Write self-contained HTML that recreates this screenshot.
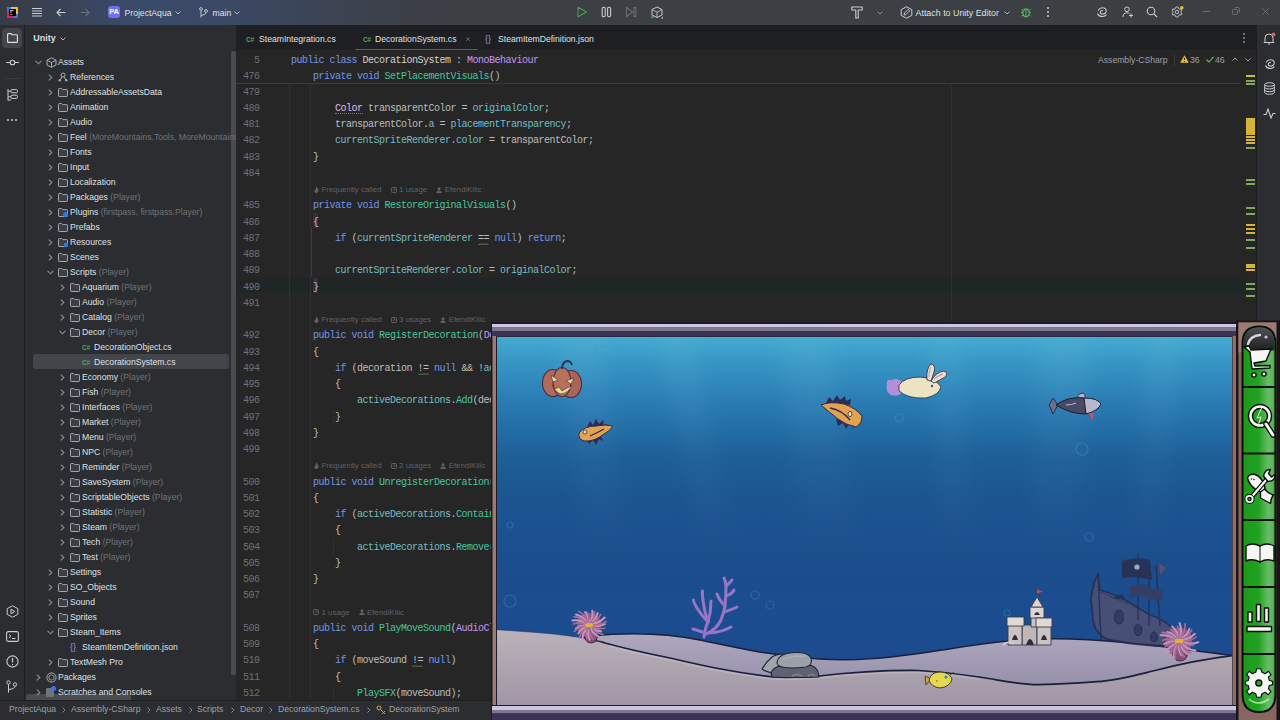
<!DOCTYPE html>
<html><head><meta charset="utf-8"><title>Rider</title>
<style>
*{margin:0;padding:0;box-sizing:border-box}
html,body{width:1280px;height:720px;overflow:hidden;background:#2b2d30;font-family:"Liberation Sans",sans-serif;color:#dfe1e5}
.a{position:absolute}
#title{position:absolute;left:0;top:0;width:1280px;height:25px;background:linear-gradient(90deg,#373b45 0%,#394154 4%,#3b4a69 10%,#3b4967 17%,#3c4454 25%,#3c3f45 33%,#3c3f42 100%);}
#lstrip{position:absolute;left:0;top:25px;width:25px;height:675px;background:#2b2d30;border-right:1px solid #1e1f22}
#proj{position:absolute;left:25px;top:25px;width:211px;height:675px;background:#2b2d30;overflow:hidden}
#tabs{position:absolute;left:236px;top:25px;width:1020px;height:25px;background:#1e1f22;border-left:1px solid #1e1f22}
#editor{position:absolute;left:236px;top:50px;width:1020px;height:650px;background:#262626;overflow:hidden}
#rstrip{position:absolute;left:1256px;top:25px;width:24px;height:675px;background:#2b2d30;border-left:1px solid #1e1f22}
#status{position:absolute;left:0;top:700px;width:1280px;height:20px;background:#2b2d30;border-top:1px solid #1e1f22}
.ui{font-size:8.65px;color:#dfe1e5;white-space:nowrap;position:absolute;line-height:15px}
.tn{position:absolute;font-size:8.65px;line-height:15px;color:#dfe1e5;white-space:nowrap}
.tx{color:#6f737a}
.chev{position:absolute}
.ic{position:absolute}
.csic{position:absolute;font-size:6.5px;font-weight:bold;color:#5e9e5e;line-height:15px;letter-spacing:-0.3px}
.jsic{position:absolute;font-size:9px;color:#a38bd6;line-height:15px}
.sel{position:absolute;left:33px;width:196px;height:15px;background:#43454a;border-radius:3px}
.ln{position:absolute;left:0;width:23.5px;text-align:right;font-family:"Liberation Mono",monospace;font-size:10px;letter-spacing:-0.5px;line-height:16.25px;color:#6e7074}
.cl{position:absolute;left:55px;font-family:"Liberation Mono",monospace;font-size:10px;letter-spacing:-0.5px;line-height:16.25px;color:#bdbdbd;white-space:pre}
.hint{position:absolute;font-size:7.9px;line-height:16.25px;color:#5f6166;white-space:nowrap}
.hint .sp{display:inline-block;width:9px}
.hic{display:inline-block;vertical-align:-0.5px;margin-right:2.5px}
.hi-fl,.hi-us,.hi-au{display:inline-block;width:5px;height:6px;background:#5c5f64;margin-right:2px;vertical-align:-0.5px;border-radius:1px}
svg{display:block}
.ic svg{display:block}

</style></head>
<body>
<div id="title">
  <!-- rider logo -->
  <svg class="a" style="left:7px;top:7px" width="11" height="11" viewBox="0 0 11 11">
    <rect x="0" y="0" width="11" height="11" rx="1" fill="#e01e6a"/>
    <path d="M3 0 H10 Q11 0 11 1 V8 L8 8 V3 H3 Z" fill="#f2c230"/>
    <path d="M0 0 H4 V2 H2 V4 H0 Z" fill="#3b78d4"/>
    <path d="M11 7 V11 H7 V9 H9 V7 Z" fill="#3b78d4"/>
    <rect x="2" y="2" width="7" height="7" fill="#000"/>
    <path d="M3 3.5 H6.5 M3 5 H5" stroke="#d8d8d8" stroke-width="0.9"/>
    <path d="M3 7.5 H5.5" stroke="#b8b8b8" stroke-width="0.7"/>
  </svg>
  <!-- hamburger -->
  <svg class="a" style="left:32px;top:7px" width="10" height="10" viewBox="0 0 10 10"><path d="M0 1.5H10M0 4H10M0 6.5H10M0 9H10" stroke="#c9ccd1" stroke-width="1"/></svg>
  <!-- back/forward -->
  <svg class="a" style="left:56px;top:8px" width="10" height="9" viewBox="0 0 10 9"><path d="M9.5 4.5H1M4.5 1L1 4.5L4.5 8" fill="none" stroke="#c9ccd1" stroke-width="1.1"/></svg>
  <svg class="a" style="left:80px;top:8px" width="10" height="9" viewBox="0 0 10 9"><path d="M0.5 4.5H9M5.5 1L9 4.5L5.5 8" fill="none" stroke="#6a6e75" stroke-width="1.1"/></svg>
  <!-- PA -->
  <div class="a" style="left:108px;top:6px;width:12px;height:12px;background:#6f6ff0;border-radius:3px;color:#fff;font-size:7.5px;font-weight:bold;line-height:12px;text-align:center;letter-spacing:-0.2px">PA</div>
  <div class="ui" style="left:124.5px;top:5.5px;font-size:8.65px">ProjectAqua</div>
  <svg class="a" style="left:175px;top:11px" width="6" height="4" viewBox="0 0 6 4"><path d="M0.5 0.5L3 3L5.5 0.5" fill="none" stroke="#b0b3b8" stroke-width="1"/></svg>
  <!-- branch -->
  <svg class="a" style="left:199px;top:7px" width="9" height="11" viewBox="0 0 9 11"><circle cx="2" cy="2" r="1.4" fill="none" stroke="#c9ccd1" stroke-width="0.9"/><circle cx="7" cy="4" r="1.4" fill="none" stroke="#c9ccd1" stroke-width="0.9"/><path d="M2 3.5V10.5M7 5.5Q7 8 2 8.5" fill="none" stroke="#c9ccd1" stroke-width="0.9"/></svg>
  <div class="ui" style="left:212.5px;top:5.5px;font-size:8.65px">main</div>
  <svg class="a" style="left:234px;top:11px" width="6" height="4" viewBox="0 0 6 4"><path d="M0.5 0.5L3 3L5.5 0.5" fill="none" stroke="#b0b3b8" stroke-width="1"/></svg>
  <!-- run controls -->
  <svg class="a" style="left:576px;top:6px" width="12" height="12" viewBox="0 0 12 12"><path d="M2 1.2L10.5 6L2 10.8Z" fill="none" stroke="#4f9a55" stroke-width="1.1" stroke-linejoin="round"/></svg>
  <svg class="a" style="left:601px;top:6px" width="11" height="12" viewBox="0 0 11 12"><rect x="1.2" y="1.2" width="3" height="9.6" rx="1.2" fill="none" stroke="#c9ccd1" stroke-width="1.1"/><rect x="6.6" y="1.2" width="3" height="9.6" rx="1.2" fill="none" stroke="#c9ccd1" stroke-width="1.1"/></svg>
  <svg class="a" style="left:625px;top:6px" width="12" height="12" viewBox="0 0 12 12"><path d="M1.5 1.5L7.5 6L1.5 10.5Z" fill="none" stroke="#6a6e75" stroke-width="1.1"/><rect x="9" y="1.5" width="1.8" height="9" fill="none" stroke="#6a6e75" stroke-width="1"/></svg>
  <svg class="a" style="left:650px;top:6px" width="14" height="13" viewBox="0 0 14 13"><path d="M7 1L12 3.5V9L7 11.5L2 9V3.5Z" fill="none" stroke="#c9ccd1" stroke-width="1"/><path d="M7 6.3L11 4M7 6.3V11M7 6.3L3 4" fill="none" stroke="#c9ccd1" stroke-width="0.8"/><circle cx="2.5" cy="11" r="1.2" fill="#4e9a50"/><path d="M11 12.5L13 10.5V12.5Z" fill="#c9ccd1"/></svg>
  <!-- hammer -->
  <svg class="a" style="left:851px;top:6px" width="12" height="13" viewBox="0 0 12 13"><path d="M0.8 1H11.2V4H7.2V12H4.8V4H0.8Z" fill="none" stroke="#c9ccd1" stroke-width="1.1" stroke-linejoin="round"/></svg>
  <svg class="a" style="left:877px;top:11px" width="6" height="4" viewBox="0 0 6 4"><path d="M0.5 0.5L3 3L5.5 0.5" fill="none" stroke="#8c8f94" stroke-width="1"/></svg>
  <!-- attach -->
  <svg class="a" style="left:900px;top:6px" width="13" height="13" viewBox="0 0 13 13"><path d="M6.5 0.8L11.8 3.6V9.4L6.5 12.2L1.2 9.4V3.6Z" fill="none" stroke="#c9ccd1" stroke-width="1"/><path d="M4 9L4.5 7L8.2 3.3L9.7 4.8L6 8.5Z" fill="none" stroke="#c9ccd1" stroke-width="0.9"/></svg>
  <div class="ui" style="left:915.5px;top:6px;font-size:8.9px">Attach to Unity Editor</div>
  <svg class="a" style="left:1004px;top:11px" width="6" height="4" viewBox="0 0 6 4"><path d="M0.5 0.5L3 3L5.5 0.5" fill="none" stroke="#b0b3b8" stroke-width="1"/></svg>
  <!-- bug -->
  <svg class="a" style="left:1020px;top:6px" width="12" height="12" viewBox="0 0 12 12"><ellipse cx="6" cy="7" rx="3.2" ry="3.8" fill="none" stroke="#5fb865" stroke-width="1.2"/><path d="M4 2.5L5 3.5M8 2.5L7 3.5M1 6.5H2.8M9.2 6.5H11M1.5 10L3 9M10.5 10L9 9M1.5 3.5L3 4.5M10.5 3.5L9 4.5M6 4V10.5" stroke="#5fb865" stroke-width="1"/></svg>
  <!-- dots -->
  <div class="a" style="left:1047px;top:7px;width:2px;height:2px;background:#c9ccd1;border-radius:1px;box-shadow:0 4px 0 #c9ccd1,0 8px 0 #c9ccd1"></div>
  <!-- ai -->
  <svg class="a" style="left:1096px;top:6px" width="12" height="12" viewBox="0 0 12 12"><path d="M2 4.5Q4 1 8 2Q11 3 10 6Q9 8.5 6 8Q3.8 7.5 4.5 5.5Q5.3 4 7 4.8M1.5 7.5Q3 11 7 10.5Q9.5 10 10.5 8.5" fill="none" stroke="#c9ccd1" stroke-width="1.1"/></svg>
  <!-- user add -->
  <svg class="a" style="left:1122px;top:6px" width="12" height="12" viewBox="0 0 12 12"><circle cx="5" cy="3.3" r="2.3" fill="none" stroke="#c9ccd1" stroke-width="1"/><path d="M1 11Q1 6.8 5 6.8Q6.5 6.8 7.3 7.4" fill="none" stroke="#c9ccd1" stroke-width="1"/><path d="M9 7.5V11.5M7 9.5H11" stroke="#c9ccd1" stroke-width="1"/></svg>
  <!-- search -->
  <svg class="a" style="left:1146px;top:6px" width="12" height="12" viewBox="0 0 12 12"><circle cx="5" cy="5" r="3.8" fill="none" stroke="#c9ccd1" stroke-width="1.1"/><path d="M7.8 7.8L11 11" stroke="#c9ccd1" stroke-width="1.2"/></svg>
  <!-- gear -->
  <svg class="a" style="left:1171px;top:6px" width="13" height="12" viewBox="0 0 13 12"><path d="M6 0.8L7.3 1.3L7.6 2.6L8.9 3.3L10.1 2.9L10.9 4.1L10.1 5.2V6.8L10.9 7.9L10.1 9.1L8.9 8.7L7.6 9.4L7.3 10.7L6 11.2L4.7 10.7L4.4 9.4L3.1 8.7L1.9 9.1L1.1 7.9L1.9 6.8V5.2L1.1 4.1L1.9 2.9L3.1 3.3L4.4 2.6L4.7 1.3Z" fill="none" stroke="#c9ccd1" stroke-width="0.9"/><circle cx="6" cy="6" r="1.7" fill="none" stroke="#c9ccd1" stroke-width="0.9"/><circle cx="10.8" cy="1.8" r="1.8" fill="#e8b93a"/></svg>
  <!-- window controls -->
  <div class="a" style="left:1203px;top:11px;width:7px;height:1px;background:#6a6e75"></div>
  <svg class="a" style="left:1232px;top:7px" width="8" height="8" viewBox="0 0 8 8"><rect x="0.5" y="2.5" width="5" height="5" rx="1" fill="none" stroke="#6a6e75"/><path d="M2.5 1.5Q2.5 0.5 3.5 0.5H6.5Q7.5 0.5 7.5 1.5V4.5Q7.5 5.5 6.5 5.5" fill="none" stroke="#6a6e75"/></svg>
  <svg class="a" style="left:1262px;top:8px" width="7" height="7" viewBox="0 0 7 7"><path d="M0.5 0.5L6.5 6.5M6.5 0.5L0.5 6.5" stroke="#6a6e75" stroke-width="1"/></svg>
</div>
<div id="lstrip">
  <div class="a" style="left:2px;top:3px;width:20px;height:20px;background:#43454a;border-radius:4px"></div>
  <svg class="a" style="left:7px;top:8px" width="11" height="10" viewBox="0 0 11 10"><path d="M0.6 1.3Q0.6 0.6 1.3 0.6H4L5 1.7H9.7Q10.4 1.7 10.4 2.4V8.7Q10.4 9.4 9.7 9.4H1.3Q0.6 9.4 0.6 8.7Z" fill="none" stroke="#dfe1e5" stroke-width="1.1"/></svg>
  <svg class="a" style="left:6px;top:34px" width="13" height="7" viewBox="0 0 13 7"><circle cx="6.5" cy="3.5" r="2.3" fill="none" stroke="#c9ccd1" stroke-width="1.1"/><path d="M0 3.5H4.2M8.8 3.5H13" stroke="#c9ccd1" stroke-width="1.1"/></svg>
  <div class="a" style="left:5px;top:53px;width:15px;height:1px;background:#393b40"></div>
  <svg class="a" style="left:7px;top:64px" width="11" height="12" viewBox="0 0 11 12"><rect x="4" y="0.6" width="6.4" height="3.2" rx="1" fill="none" stroke="#c9ccd1" stroke-width="1"/><rect x="4" y="6.2" width="6.4" height="3.2" rx="1" fill="none" stroke="#c9ccd1" stroke-width="1"/><path d="M1 0V11.5M1 2.2H4M1 7.8H4M1 11H4" stroke="#c9ccd1" stroke-width="1"/></svg>
  <div class="a" style="left:7px;top:94px;width:2px;height:2px;background:#c9ccd1;border-radius:1px;box-shadow:4px 0 0 #c9ccd1,8px 0 0 #c9ccd1"></div>
  <svg class="a" style="left:6px;top:580px" width="13" height="13" viewBox="0 0 13 13"><path d="M6.5 0.8L11.8 3.6V9.4L6.5 12.2L1.2 9.4V3.6Z" fill="none" stroke="#c9ccd1" stroke-width="1"/><path d="M5 4.2L8.8 6.5L5 8.8Z" fill="none" stroke="#c9ccd1" stroke-width="1"/></svg>
  <svg class="a" style="left:6px;top:606px" width="13" height="11" viewBox="0 0 13 11"><rect x="0.6" y="0.6" width="11.8" height="9.8" rx="1.5" fill="none" stroke="#c9ccd1" stroke-width="1.1"/><path d="M3 3.5L5 5.3L3 7M6 7.5H9.5" fill="none" stroke="#c9ccd1" stroke-width="1"/></svg>
  <svg class="a" style="left:6px;top:630px" width="13" height="13" viewBox="0 0 13 13"><circle cx="6.5" cy="6.5" r="5.6" fill="none" stroke="#c9ccd1" stroke-width="1.1"/><path d="M6.5 3V7.5M6.5 9V10" stroke="#c9ccd1" stroke-width="1.3"/></svg>
  <svg class="a" style="left:6px;top:655px" width="12" height="13" viewBox="0 0 12 13"><circle cx="2.5" cy="2.5" r="1.7" fill="none" stroke="#c9ccd1" stroke-width="1"/><circle cx="9" cy="4.5" r="1.7" fill="none" stroke="#c9ccd1" stroke-width="1"/><path d="M2.5 4.2V12.5M9 6.2Q9 9 2.5 9.5" fill="none" stroke="#c9ccd1" stroke-width="1"/></svg>
</div>
<div id="proj">
  <div class="ui" style="left:8.3px;top:5.5px;font-size:9px;font-weight:bold;color:#dcdee2">Unity</div>
  <svg class="a" style="left:35px;top:12px" width="6" height="4" viewBox="0 0 6 4"><path d="M0.5 0.5L3 3L5.5 0.5" fill="none" stroke="#b0b3b8" stroke-width="1"/></svg>
  <div class="a" style="left:206px;top:26px;width:5px;height:624px;background:#4a4c50;border-radius:2px"></div>
  <div class="a" style="left:1px;top:669px;width:105px;height:6px;background:#4a4c50;border-radius:3px 3px 0 0"></div>
  <div style="position:absolute;left:0;top:0;width:211px;height:675px">
  <div style="position:absolute;left:-25px;top:-25px">
<svg class="chev" style="left:35px;top:59.5px" width="7" height="5" viewBox="0 0 7 5"><path d="M0.6 0.8 L3.5 3.8 L6.4 0.8" fill="none" stroke="#8c8f94" stroke-width="1.1"/></svg><svg class="ic" style="left:46px;top:56.5px" width="11" height="11" viewBox="0 0 11 11"><path d="M5.5 0.8 L10 3.2 V8 L5.5 10.3 L1 8 V3.2 Z M5.5 5.5 L10 3.2 M5.5 5.5 V10.3 M5.5 5.5 L1 3.2" fill="none" stroke="#a8abb0" stroke-width="1"/></svg><div class="tn" style="left:58px;top:54.5px">Assets</div>
<svg class="chev" style="left:48px;top:73.5px" width="5" height="7" viewBox="0 0 5 7"><path d="M0.8 0.6 L3.8 3.5 L0.8 6.4" fill="none" stroke="#8c8f94" stroke-width="1.1"/></svg><svg class="ic" style="left:58px;top:71.5px" width="10" height="10" viewBox="0 0 10 10"><circle cx="5" cy="3" r="2" fill="none" stroke="#a8abb0"/><circle cx="1.8" cy="8.3" r="1.2" fill="#a8abb0"/><circle cx="8.2" cy="8.3" r="1.2" fill="#a8abb0"/><path d="M4 4.8 L2 8 M6 4.8 L8 8" stroke="#a8abb0"/></svg><div class="tn" style="left:70px;top:69.5px">References</div>
<svg class="chev" style="left:48px;top:88.5px" width="5" height="7" viewBox="0 0 5 7"><path d="M0.8 0.6 L3.8 3.5 L0.8 6.4" fill="none" stroke="#8c8f94" stroke-width="1.1"/></svg><div class="ic" style="left:58px;top:87.5px"><svg width="10" height="9" viewBox="0 0 10 9"><path d="M0.5 1.2 Q0.5 0.5 1.2 0.5 H3.6 L4.6 1.6 H8.8 Q9.5 1.6 9.5 2.3 V7.8 Q9.5 8.5 8.8 8.5 H1.2 Q0.5 8.5 0.5 7.8 Z" fill="#3c3e43" stroke="#a2a5aa" stroke-width="1"/></svg></div><div class="tn" style="left:70px;top:84.5px">AddressableAssetsData</div>
<svg class="chev" style="left:48px;top:103.5px" width="5" height="7" viewBox="0 0 5 7"><path d="M0.8 0.6 L3.8 3.5 L0.8 6.4" fill="none" stroke="#8c8f94" stroke-width="1.1"/></svg><div class="ic" style="left:58px;top:102.5px"><svg width="10" height="9" viewBox="0 0 10 9"><path d="M0.5 1.2 Q0.5 0.5 1.2 0.5 H3.6 L4.6 1.6 H8.8 Q9.5 1.6 9.5 2.3 V7.8 Q9.5 8.5 8.8 8.5 H1.2 Q0.5 8.5 0.5 7.8 Z" fill="#3c3e43" stroke="#a2a5aa" stroke-width="1"/></svg></div><div class="tn" style="left:70px;top:99.5px">Animation</div>
<svg class="chev" style="left:48px;top:118.5px" width="5" height="7" viewBox="0 0 5 7"><path d="M0.8 0.6 L3.8 3.5 L0.8 6.4" fill="none" stroke="#8c8f94" stroke-width="1.1"/></svg><div class="ic" style="left:58px;top:117.5px"><svg width="10" height="9" viewBox="0 0 10 9"><path d="M0.5 1.2 Q0.5 0.5 1.2 0.5 H3.6 L4.6 1.6 H8.8 Q9.5 1.6 9.5 2.3 V7.8 Q9.5 8.5 8.8 8.5 H1.2 Q0.5 8.5 0.5 7.8 Z" fill="#3c3e43" stroke="#a2a5aa" stroke-width="1"/></svg></div><div class="tn" style="left:70px;top:114.5px">Audio</div>
<svg class="chev" style="left:48px;top:133.5px" width="5" height="7" viewBox="0 0 5 7"><path d="M0.8 0.6 L3.8 3.5 L0.8 6.4" fill="none" stroke="#8c8f94" stroke-width="1.1"/></svg><div class="ic" style="left:58px;top:132.5px"><svg width="10" height="9" viewBox="0 0 10 9"><path d="M0.5 1.2 Q0.5 0.5 1.2 0.5 H3.6 L4.6 1.6 H8.8 Q9.5 1.6 9.5 2.3 V7.8 Q9.5 8.5 8.8 8.5 H1.2 Q0.5 8.5 0.5 7.8 Z" fill="#3c3e43" stroke="#a2a5aa" stroke-width="1"/></svg></div><div class="tn" style="left:70px;top:129.5px">Feel <span class="tx">(MoreMountains.Tools, MoreMountains.Feedbacks)</span></div>
<svg class="chev" style="left:48px;top:148.5px" width="5" height="7" viewBox="0 0 5 7"><path d="M0.8 0.6 L3.8 3.5 L0.8 6.4" fill="none" stroke="#8c8f94" stroke-width="1.1"/></svg><div class="ic" style="left:58px;top:147.5px"><svg width="10" height="9" viewBox="0 0 10 9"><path d="M0.5 1.2 Q0.5 0.5 1.2 0.5 H3.6 L4.6 1.6 H8.8 Q9.5 1.6 9.5 2.3 V7.8 Q9.5 8.5 8.8 8.5 H1.2 Q0.5 8.5 0.5 7.8 Z" fill="#3c3e43" stroke="#a2a5aa" stroke-width="1"/></svg></div><div class="tn" style="left:70px;top:144.5px">Fonts</div>
<svg class="chev" style="left:48px;top:163.5px" width="5" height="7" viewBox="0 0 5 7"><path d="M0.8 0.6 L3.8 3.5 L0.8 6.4" fill="none" stroke="#8c8f94" stroke-width="1.1"/></svg><div class="ic" style="left:58px;top:162.5px"><svg width="10" height="9" viewBox="0 0 10 9"><path d="M0.5 1.2 Q0.5 0.5 1.2 0.5 H3.6 L4.6 1.6 H8.8 Q9.5 1.6 9.5 2.3 V7.8 Q9.5 8.5 8.8 8.5 H1.2 Q0.5 8.5 0.5 7.8 Z" fill="#3c3e43" stroke="#a2a5aa" stroke-width="1"/></svg></div><div class="tn" style="left:70px;top:159.5px">Input</div>
<svg class="chev" style="left:48px;top:178.5px" width="5" height="7" viewBox="0 0 5 7"><path d="M0.8 0.6 L3.8 3.5 L0.8 6.4" fill="none" stroke="#8c8f94" stroke-width="1.1"/></svg><div class="ic" style="left:58px;top:177.5px"><svg width="10" height="9" viewBox="0 0 10 9"><path d="M0.5 1.2 Q0.5 0.5 1.2 0.5 H3.6 L4.6 1.6 H8.8 Q9.5 1.6 9.5 2.3 V7.8 Q9.5 8.5 8.8 8.5 H1.2 Q0.5 8.5 0.5 7.8 Z" fill="#3c3e43" stroke="#a2a5aa" stroke-width="1"/></svg></div><div class="tn" style="left:70px;top:174.5px">Localization</div>
<svg class="chev" style="left:48px;top:193.5px" width="5" height="7" viewBox="0 0 5 7"><path d="M0.8 0.6 L3.8 3.5 L0.8 6.4" fill="none" stroke="#8c8f94" stroke-width="1.1"/></svg><div class="ic" style="left:58px;top:192.5px"><svg width="10" height="9" viewBox="0 0 10 9"><path d="M0.5 1.2 Q0.5 0.5 1.2 0.5 H3.6 L4.6 1.6 H8.8 Q9.5 1.6 9.5 2.3 V7.8 Q9.5 8.5 8.8 8.5 H1.2 Q0.5 8.5 0.5 7.8 Z" fill="#3c3e43" stroke="#a2a5aa" stroke-width="1"/></svg></div><div class="tn" style="left:70px;top:189.5px">Packages <span class="tx">(Player)</span></div>
<svg class="chev" style="left:48px;top:208.5px" width="5" height="7" viewBox="0 0 5 7"><path d="M0.8 0.6 L3.8 3.5 L0.8 6.4" fill="none" stroke="#8c8f94" stroke-width="1.1"/></svg><div class="ic" style="left:58px;top:207.5px"><svg width="10" height="9" viewBox="0 0 10 9"><path d="M0.5 1.2 Q0.5 0.5 1.2 0.5 H3.6 L4.6 1.6 H8.8 Q9.5 1.6 9.5 2.3 V7.8 Q9.5 8.5 8.8 8.5 H1.2 Q0.5 8.5 0.5 7.8 Z" fill="#3c3e43" stroke="#a2a5aa" stroke-width="1"/></svg></div><div style="position:absolute;left:63px;top:211.5px;width:5px;height:5px;border-radius:50%;background:#3574f0"></div><div class="tn" style="left:70px;top:204.5px">Plugins <span class="tx">(firstpass, firstpass.Player)</span></div>
<svg class="chev" style="left:48px;top:223.5px" width="5" height="7" viewBox="0 0 5 7"><path d="M0.8 0.6 L3.8 3.5 L0.8 6.4" fill="none" stroke="#8c8f94" stroke-width="1.1"/></svg><div class="ic" style="left:58px;top:222.5px"><svg width="10" height="9" viewBox="0 0 10 9"><path d="M0.5 1.2 Q0.5 0.5 1.2 0.5 H3.6 L4.6 1.6 H8.8 Q9.5 1.6 9.5 2.3 V7.8 Q9.5 8.5 8.8 8.5 H1.2 Q0.5 8.5 0.5 7.8 Z" fill="#3c3e43" stroke="#a2a5aa" stroke-width="1"/></svg></div><div class="tn" style="left:70px;top:219.5px">Prefabs</div>
<svg class="chev" style="left:48px;top:238.5px" width="5" height="7" viewBox="0 0 5 7"><path d="M0.8 0.6 L3.8 3.5 L0.8 6.4" fill="none" stroke="#8c8f94" stroke-width="1.1"/></svg><div class="ic" style="left:58px;top:237.5px"><svg width="10" height="9" viewBox="0 0 10 9"><path d="M0.5 1.2 Q0.5 0.5 1.2 0.5 H3.6 L4.6 1.6 H8.8 Q9.5 1.6 9.5 2.3 V7.8 Q9.5 8.5 8.8 8.5 H1.2 Q0.5 8.5 0.5 7.8 Z" fill="#3c3e43" stroke="#a2a5aa" stroke-width="1"/></svg></div><div style="position:absolute;left:64px;top:242.5px;width:4px;height:4px;background:#3574f0"></div><div class="tn" style="left:70px;top:234.5px">Resources</div>
<svg class="chev" style="left:48px;top:253.5px" width="5" height="7" viewBox="0 0 5 7"><path d="M0.8 0.6 L3.8 3.5 L0.8 6.4" fill="none" stroke="#8c8f94" stroke-width="1.1"/></svg><div class="ic" style="left:58px;top:252.5px"><svg width="10" height="9" viewBox="0 0 10 9"><path d="M0.5 1.2 Q0.5 0.5 1.2 0.5 H3.6 L4.6 1.6 H8.8 Q9.5 1.6 9.5 2.3 V7.8 Q9.5 8.5 8.8 8.5 H1.2 Q0.5 8.5 0.5 7.8 Z" fill="#3c3e43" stroke="#a2a5aa" stroke-width="1"/></svg></div><div class="tn" style="left:70px;top:249.5px">Scenes</div>
<svg class="chev" style="left:47px;top:269.5px" width="7" height="5" viewBox="0 0 7 5"><path d="M0.6 0.8 L3.5 3.8 L6.4 0.8" fill="none" stroke="#8c8f94" stroke-width="1.1"/></svg><div class="ic" style="left:58px;top:267.5px"><svg width="10" height="9" viewBox="0 0 10 9"><path d="M0.5 1.2 Q0.5 0.5 1.2 0.5 H3.6 L4.6 1.6 H8.8 Q9.5 1.6 9.5 2.3 V7.8 Q9.5 8.5 8.8 8.5 H1.2 Q0.5 8.5 0.5 7.8 Z" fill="#3c3e43" stroke="#a2a5aa" stroke-width="1"/></svg></div><div class="tn" style="left:70px;top:264.5px">Scripts <span class="tx">(Player)</span></div>
<svg class="chev" style="left:60px;top:283.5px" width="5" height="7" viewBox="0 0 5 7"><path d="M0.8 0.6 L3.8 3.5 L0.8 6.4" fill="none" stroke="#8c8f94" stroke-width="1.1"/></svg><div class="ic" style="left:70px;top:282.5px"><svg width="10" height="9" viewBox="0 0 10 9"><path d="M0.5 1.2 Q0.5 0.5 1.2 0.5 H3.6 L4.6 1.6 H8.8 Q9.5 1.6 9.5 2.3 V7.8 Q9.5 8.5 8.8 8.5 H1.2 Q0.5 8.5 0.5 7.8 Z" fill="#3c3e43" stroke="#a2a5aa" stroke-width="1"/></svg></div><div class="tn" style="left:82px;top:279.5px">Aquarium <span class="tx">(Player)</span></div>
<svg class="chev" style="left:60px;top:298.5px" width="5" height="7" viewBox="0 0 5 7"><path d="M0.8 0.6 L3.8 3.5 L0.8 6.4" fill="none" stroke="#8c8f94" stroke-width="1.1"/></svg><div class="ic" style="left:70px;top:297.5px"><svg width="10" height="9" viewBox="0 0 10 9"><path d="M0.5 1.2 Q0.5 0.5 1.2 0.5 H3.6 L4.6 1.6 H8.8 Q9.5 1.6 9.5 2.3 V7.8 Q9.5 8.5 8.8 8.5 H1.2 Q0.5 8.5 0.5 7.8 Z" fill="#3c3e43" stroke="#a2a5aa" stroke-width="1"/></svg></div><div class="tn" style="left:82px;top:294.5px">Audio <span class="tx">(Player)</span></div>
<svg class="chev" style="left:60px;top:313.5px" width="5" height="7" viewBox="0 0 5 7"><path d="M0.8 0.6 L3.8 3.5 L0.8 6.4" fill="none" stroke="#8c8f94" stroke-width="1.1"/></svg><div class="ic" style="left:70px;top:312.5px"><svg width="10" height="9" viewBox="0 0 10 9"><path d="M0.5 1.2 Q0.5 0.5 1.2 0.5 H3.6 L4.6 1.6 H8.8 Q9.5 1.6 9.5 2.3 V7.8 Q9.5 8.5 8.8 8.5 H1.2 Q0.5 8.5 0.5 7.8 Z" fill="#3c3e43" stroke="#a2a5aa" stroke-width="1"/></svg></div><div class="tn" style="left:82px;top:309.5px">Catalog <span class="tx">(Player)</span></div>
<svg class="chev" style="left:59px;top:329.5px" width="7" height="5" viewBox="0 0 7 5"><path d="M0.6 0.8 L3.5 3.8 L6.4 0.8" fill="none" stroke="#8c8f94" stroke-width="1.1"/></svg><div class="ic" style="left:70px;top:327.5px"><svg width="10" height="9" viewBox="0 0 10 9"><path d="M0.5 1.2 Q0.5 0.5 1.2 0.5 H3.6 L4.6 1.6 H8.8 Q9.5 1.6 9.5 2.3 V7.8 Q9.5 8.5 8.8 8.5 H1.2 Q0.5 8.5 0.5 7.8 Z" fill="#3c3e43" stroke="#a2a5aa" stroke-width="1"/></svg></div><div class="tn" style="left:82px;top:324.5px">Decor <span class="tx">(Player)</span></div>
<div class="csic" style="left:82px;top:339.5px">C#</div><div class="tn" style="left:94px;top:339.5px">DecorationObject.cs</div>
<div class="sel" style="top:353.7px"></div>
<div class="csic" style="left:82px;top:354.5px">C#</div><div class="tn" style="left:94px;top:354.5px">DecorationSystem.cs</div>
<svg class="chev" style="left:60px;top:373.5px" width="5" height="7" viewBox="0 0 5 7"><path d="M0.8 0.6 L3.8 3.5 L0.8 6.4" fill="none" stroke="#8c8f94" stroke-width="1.1"/></svg><div class="ic" style="left:70px;top:372.5px"><svg width="10" height="9" viewBox="0 0 10 9"><path d="M0.5 1.2 Q0.5 0.5 1.2 0.5 H3.6 L4.6 1.6 H8.8 Q9.5 1.6 9.5 2.3 V7.8 Q9.5 8.5 8.8 8.5 H1.2 Q0.5 8.5 0.5 7.8 Z" fill="#3c3e43" stroke="#a2a5aa" stroke-width="1"/></svg></div><div class="tn" style="left:82px;top:369.5px">Economy <span class="tx">(Player)</span></div>
<svg class="chev" style="left:60px;top:388.5px" width="5" height="7" viewBox="0 0 5 7"><path d="M0.8 0.6 L3.8 3.5 L0.8 6.4" fill="none" stroke="#8c8f94" stroke-width="1.1"/></svg><div class="ic" style="left:70px;top:387.5px"><svg width="10" height="9" viewBox="0 0 10 9"><path d="M0.5 1.2 Q0.5 0.5 1.2 0.5 H3.6 L4.6 1.6 H8.8 Q9.5 1.6 9.5 2.3 V7.8 Q9.5 8.5 8.8 8.5 H1.2 Q0.5 8.5 0.5 7.8 Z" fill="#3c3e43" stroke="#a2a5aa" stroke-width="1"/></svg></div><div class="tn" style="left:82px;top:384.5px">Fish <span class="tx">(Player)</span></div>
<svg class="chev" style="left:60px;top:403.5px" width="5" height="7" viewBox="0 0 5 7"><path d="M0.8 0.6 L3.8 3.5 L0.8 6.4" fill="none" stroke="#8c8f94" stroke-width="1.1"/></svg><div class="ic" style="left:70px;top:402.5px"><svg width="10" height="9" viewBox="0 0 10 9"><path d="M0.5 1.2 Q0.5 0.5 1.2 0.5 H3.6 L4.6 1.6 H8.8 Q9.5 1.6 9.5 2.3 V7.8 Q9.5 8.5 8.8 8.5 H1.2 Q0.5 8.5 0.5 7.8 Z" fill="#3c3e43" stroke="#a2a5aa" stroke-width="1"/></svg></div><div class="tn" style="left:82px;top:399.5px">Interfaces <span class="tx">(Player)</span></div>
<svg class="chev" style="left:60px;top:418.5px" width="5" height="7" viewBox="0 0 5 7"><path d="M0.8 0.6 L3.8 3.5 L0.8 6.4" fill="none" stroke="#8c8f94" stroke-width="1.1"/></svg><div class="ic" style="left:70px;top:417.5px"><svg width="10" height="9" viewBox="0 0 10 9"><path d="M0.5 1.2 Q0.5 0.5 1.2 0.5 H3.6 L4.6 1.6 H8.8 Q9.5 1.6 9.5 2.3 V7.8 Q9.5 8.5 8.8 8.5 H1.2 Q0.5 8.5 0.5 7.8 Z" fill="#3c3e43" stroke="#a2a5aa" stroke-width="1"/></svg></div><div class="tn" style="left:82px;top:414.5px">Market <span class="tx">(Player)</span></div>
<svg class="chev" style="left:60px;top:433.5px" width="5" height="7" viewBox="0 0 5 7"><path d="M0.8 0.6 L3.8 3.5 L0.8 6.4" fill="none" stroke="#8c8f94" stroke-width="1.1"/></svg><div class="ic" style="left:70px;top:432.5px"><svg width="10" height="9" viewBox="0 0 10 9"><path d="M0.5 1.2 Q0.5 0.5 1.2 0.5 H3.6 L4.6 1.6 H8.8 Q9.5 1.6 9.5 2.3 V7.8 Q9.5 8.5 8.8 8.5 H1.2 Q0.5 8.5 0.5 7.8 Z" fill="#3c3e43" stroke="#a2a5aa" stroke-width="1"/></svg></div><div class="tn" style="left:82px;top:429.5px">Menu <span class="tx">(Player)</span></div>
<svg class="chev" style="left:60px;top:448.5px" width="5" height="7" viewBox="0 0 5 7"><path d="M0.8 0.6 L3.8 3.5 L0.8 6.4" fill="none" stroke="#8c8f94" stroke-width="1.1"/></svg><div class="ic" style="left:70px;top:447.5px"><svg width="10" height="9" viewBox="0 0 10 9"><path d="M0.5 1.2 Q0.5 0.5 1.2 0.5 H3.6 L4.6 1.6 H8.8 Q9.5 1.6 9.5 2.3 V7.8 Q9.5 8.5 8.8 8.5 H1.2 Q0.5 8.5 0.5 7.8 Z" fill="#3c3e43" stroke="#a2a5aa" stroke-width="1"/></svg></div><div class="tn" style="left:82px;top:444.5px">NPC <span class="tx">(Player)</span></div>
<svg class="chev" style="left:60px;top:463.5px" width="5" height="7" viewBox="0 0 5 7"><path d="M0.8 0.6 L3.8 3.5 L0.8 6.4" fill="none" stroke="#8c8f94" stroke-width="1.1"/></svg><div class="ic" style="left:70px;top:462.5px"><svg width="10" height="9" viewBox="0 0 10 9"><path d="M0.5 1.2 Q0.5 0.5 1.2 0.5 H3.6 L4.6 1.6 H8.8 Q9.5 1.6 9.5 2.3 V7.8 Q9.5 8.5 8.8 8.5 H1.2 Q0.5 8.5 0.5 7.8 Z" fill="#3c3e43" stroke="#a2a5aa" stroke-width="1"/></svg></div><div class="tn" style="left:82px;top:459.5px">Reminder <span class="tx">(Player)</span></div>
<svg class="chev" style="left:60px;top:478.5px" width="5" height="7" viewBox="0 0 5 7"><path d="M0.8 0.6 L3.8 3.5 L0.8 6.4" fill="none" stroke="#8c8f94" stroke-width="1.1"/></svg><div class="ic" style="left:70px;top:477.5px"><svg width="10" height="9" viewBox="0 0 10 9"><path d="M0.5 1.2 Q0.5 0.5 1.2 0.5 H3.6 L4.6 1.6 H8.8 Q9.5 1.6 9.5 2.3 V7.8 Q9.5 8.5 8.8 8.5 H1.2 Q0.5 8.5 0.5 7.8 Z" fill="#3c3e43" stroke="#a2a5aa" stroke-width="1"/></svg></div><div class="tn" style="left:82px;top:474.5px">SaveSystem <span class="tx">(Player)</span></div>
<svg class="chev" style="left:60px;top:493.5px" width="5" height="7" viewBox="0 0 5 7"><path d="M0.8 0.6 L3.8 3.5 L0.8 6.4" fill="none" stroke="#8c8f94" stroke-width="1.1"/></svg><div class="ic" style="left:70px;top:492.5px"><svg width="10" height="9" viewBox="0 0 10 9"><path d="M0.5 1.2 Q0.5 0.5 1.2 0.5 H3.6 L4.6 1.6 H8.8 Q9.5 1.6 9.5 2.3 V7.8 Q9.5 8.5 8.8 8.5 H1.2 Q0.5 8.5 0.5 7.8 Z" fill="#3c3e43" stroke="#a2a5aa" stroke-width="1"/></svg></div><div class="tn" style="left:82px;top:489.5px">ScriptableObjects <span class="tx">(Player)</span></div>
<svg class="chev" style="left:60px;top:508.5px" width="5" height="7" viewBox="0 0 5 7"><path d="M0.8 0.6 L3.8 3.5 L0.8 6.4" fill="none" stroke="#8c8f94" stroke-width="1.1"/></svg><div class="ic" style="left:70px;top:507.5px"><svg width="10" height="9" viewBox="0 0 10 9"><path d="M0.5 1.2 Q0.5 0.5 1.2 0.5 H3.6 L4.6 1.6 H8.8 Q9.5 1.6 9.5 2.3 V7.8 Q9.5 8.5 8.8 8.5 H1.2 Q0.5 8.5 0.5 7.8 Z" fill="#3c3e43" stroke="#a2a5aa" stroke-width="1"/></svg></div><div class="tn" style="left:82px;top:504.5px">Statistic <span class="tx">(Player)</span></div>
<svg class="chev" style="left:60px;top:523.5px" width="5" height="7" viewBox="0 0 5 7"><path d="M0.8 0.6 L3.8 3.5 L0.8 6.4" fill="none" stroke="#8c8f94" stroke-width="1.1"/></svg><div class="ic" style="left:70px;top:522.5px"><svg width="10" height="9" viewBox="0 0 10 9"><path d="M0.5 1.2 Q0.5 0.5 1.2 0.5 H3.6 L4.6 1.6 H8.8 Q9.5 1.6 9.5 2.3 V7.8 Q9.5 8.5 8.8 8.5 H1.2 Q0.5 8.5 0.5 7.8 Z" fill="#3c3e43" stroke="#a2a5aa" stroke-width="1"/></svg></div><div class="tn" style="left:82px;top:519.5px">Steam <span class="tx">(Player)</span></div>
<svg class="chev" style="left:60px;top:538.5px" width="5" height="7" viewBox="0 0 5 7"><path d="M0.8 0.6 L3.8 3.5 L0.8 6.4" fill="none" stroke="#8c8f94" stroke-width="1.1"/></svg><div class="ic" style="left:70px;top:537.5px"><svg width="10" height="9" viewBox="0 0 10 9"><path d="M0.5 1.2 Q0.5 0.5 1.2 0.5 H3.6 L4.6 1.6 H8.8 Q9.5 1.6 9.5 2.3 V7.8 Q9.5 8.5 8.8 8.5 H1.2 Q0.5 8.5 0.5 7.8 Z" fill="#3c3e43" stroke="#a2a5aa" stroke-width="1"/></svg></div><div class="tn" style="left:82px;top:534.5px">Tech <span class="tx">(Player)</span></div>
<svg class="chev" style="left:60px;top:553.5px" width="5" height="7" viewBox="0 0 5 7"><path d="M0.8 0.6 L3.8 3.5 L0.8 6.4" fill="none" stroke="#8c8f94" stroke-width="1.1"/></svg><div class="ic" style="left:70px;top:552.5px"><svg width="10" height="9" viewBox="0 0 10 9"><path d="M0.5 1.2 Q0.5 0.5 1.2 0.5 H3.6 L4.6 1.6 H8.8 Q9.5 1.6 9.5 2.3 V7.8 Q9.5 8.5 8.8 8.5 H1.2 Q0.5 8.5 0.5 7.8 Z" fill="#3c3e43" stroke="#a2a5aa" stroke-width="1"/></svg></div><div class="tn" style="left:82px;top:549.5px">Test <span class="tx">(Player)</span></div>
<svg class="chev" style="left:48px;top:568.5px" width="5" height="7" viewBox="0 0 5 7"><path d="M0.8 0.6 L3.8 3.5 L0.8 6.4" fill="none" stroke="#8c8f94" stroke-width="1.1"/></svg><div class="ic" style="left:58px;top:567.5px"><svg width="10" height="9" viewBox="0 0 10 9"><path d="M0.5 1.2 Q0.5 0.5 1.2 0.5 H3.6 L4.6 1.6 H8.8 Q9.5 1.6 9.5 2.3 V7.8 Q9.5 8.5 8.8 8.5 H1.2 Q0.5 8.5 0.5 7.8 Z" fill="#3c3e43" stroke="#a2a5aa" stroke-width="1"/></svg></div><div class="tn" style="left:70px;top:564.5px">Settings</div>
<svg class="chev" style="left:48px;top:583.5px" width="5" height="7" viewBox="0 0 5 7"><path d="M0.8 0.6 L3.8 3.5 L0.8 6.4" fill="none" stroke="#8c8f94" stroke-width="1.1"/></svg><div class="ic" style="left:58px;top:582.5px"><svg width="10" height="9" viewBox="0 0 10 9"><path d="M0.5 1.2 Q0.5 0.5 1.2 0.5 H3.6 L4.6 1.6 H8.8 Q9.5 1.6 9.5 2.3 V7.8 Q9.5 8.5 8.8 8.5 H1.2 Q0.5 8.5 0.5 7.8 Z" fill="#3c3e43" stroke="#a2a5aa" stroke-width="1"/></svg></div><div class="tn" style="left:70px;top:579.5px">SO_Objects</div>
<svg class="chev" style="left:48px;top:598.5px" width="5" height="7" viewBox="0 0 5 7"><path d="M0.8 0.6 L3.8 3.5 L0.8 6.4" fill="none" stroke="#8c8f94" stroke-width="1.1"/></svg><div class="ic" style="left:58px;top:597.5px"><svg width="10" height="9" viewBox="0 0 10 9"><path d="M0.5 1.2 Q0.5 0.5 1.2 0.5 H3.6 L4.6 1.6 H8.8 Q9.5 1.6 9.5 2.3 V7.8 Q9.5 8.5 8.8 8.5 H1.2 Q0.5 8.5 0.5 7.8 Z" fill="#3c3e43" stroke="#a2a5aa" stroke-width="1"/></svg></div><div class="tn" style="left:70px;top:594.5px">Sound</div>
<svg class="chev" style="left:48px;top:613.5px" width="5" height="7" viewBox="0 0 5 7"><path d="M0.8 0.6 L3.8 3.5 L0.8 6.4" fill="none" stroke="#8c8f94" stroke-width="1.1"/></svg><div class="ic" style="left:58px;top:612.5px"><svg width="10" height="9" viewBox="0 0 10 9"><path d="M0.5 1.2 Q0.5 0.5 1.2 0.5 H3.6 L4.6 1.6 H8.8 Q9.5 1.6 9.5 2.3 V7.8 Q9.5 8.5 8.8 8.5 H1.2 Q0.5 8.5 0.5 7.8 Z" fill="#3c3e43" stroke="#a2a5aa" stroke-width="1"/></svg></div><div class="tn" style="left:70px;top:609.5px">Sprites</div>
<svg class="chev" style="left:47px;top:629.5px" width="7" height="5" viewBox="0 0 7 5"><path d="M0.6 0.8 L3.5 3.8 L6.4 0.8" fill="none" stroke="#8c8f94" stroke-width="1.1"/></svg><div class="ic" style="left:58px;top:627.5px"><svg width="10" height="9" viewBox="0 0 10 9"><path d="M0.5 1.2 Q0.5 0.5 1.2 0.5 H3.6 L4.6 1.6 H8.8 Q9.5 1.6 9.5 2.3 V7.8 Q9.5 8.5 8.8 8.5 H1.2 Q0.5 8.5 0.5 7.8 Z" fill="#3c3e43" stroke="#a2a5aa" stroke-width="1"/></svg></div><div class="tn" style="left:70px;top:624.5px">Steam_Items</div>
<div class="jsic" style="left:70px;top:639.5px">{}</div><div class="tn" style="left:82px;top:639.5px">SteamItemDefinition.json</div>
<svg class="chev" style="left:48px;top:658.5px" width="5" height="7" viewBox="0 0 5 7"><path d="M0.8 0.6 L3.8 3.5 L0.8 6.4" fill="none" stroke="#8c8f94" stroke-width="1.1"/></svg><div class="ic" style="left:58px;top:657.5px"><svg width="10" height="9" viewBox="0 0 10 9"><path d="M0.5 1.2 Q0.5 0.5 1.2 0.5 H3.6 L4.6 1.6 H8.8 Q9.5 1.6 9.5 2.3 V7.8 Q9.5 8.5 8.8 8.5 H1.2 Q0.5 8.5 0.5 7.8 Z" fill="#3c3e43" stroke="#a2a5aa" stroke-width="1"/></svg></div><div class="tn" style="left:70px;top:654.5px">TextMesh Pro</div>
<svg class="chev" style="left:36px;top:673.5px" width="5" height="7" viewBox="0 0 5 7"><path d="M0.8 0.6 L3.8 3.5 L0.8 6.4" fill="none" stroke="#8c8f94" stroke-width="1.1"/></svg><svg class="ic" style="left:46px;top:671.5px" width="11" height="11" viewBox="0 0 11 11"><circle cx="5.5" cy="5.5" r="4.6" fill="none" stroke="#a8abb0"/><path d="M3 4 L5.5 2.8 L8 4 V7 L5.5 8.2 L3 7 Z" fill="none" stroke="#a8abb0" stroke-width="0.8"/></svg><div class="tn" style="left:58px;top:669.5px">Packages</div>
<svg class="chev" style="left:36px;top:688.5px" width="5" height="7" viewBox="0 0 5 7"><path d="M0.8 0.6 L3.8 3.5 L0.8 6.4" fill="none" stroke="#8c8f94" stroke-width="1.1"/></svg><div style="position:absolute;left:46px;top:687.5px;width:8px;height:9px;background:#6f737a;border-radius:1px"></div><div style="position:absolute;left:51px;top:685.5px;width:5px;height:5px;border-radius:50%;background:#3574f0"></div><div class="tn" style="left:58px;top:684.5px">Scratches and Consoles</div>
  </div>
  </div>
</div>
<div id="tabs">
  <div class="csic a" style="left:9px;top:7px;font-size:6.5px;line-height:15px">C#</div>
  <div class="ui" style="left:22px;top:7px">SteamIntegration.cs</div>
  <div class="csic a" style="left:126px;top:7px;font-size:6.5px;line-height:15px">C#</div>
  <div class="ui" style="left:138px;top:7px">DecorationSystem.cs</div>
  <svg class="a" style="left:228.5px;top:12px" width="5" height="5" viewBox="0 0 6 6"><path d="M0.5 0.5L4.5 4.5M4.5 0.5L0.5 4.5" stroke="#7c7f84" stroke-width="0.9"/></svg>
  <div class="a" style="left:118px;top:23.5px;width:123px;height:2px;background:#5b5e64;border-radius:1px"></div>
  <div class="jsic a" style="left:248px;top:7px;font-size:9px;line-height:15px">{}</div>
  <div class="ui" style="left:261px;top:7px">SteamItemDefinition.json</div>
  <div class="a" style="left:1006px;top:8px;width:2px;height:2px;background:#8c8f94;border-radius:1px;box-shadow:0 4px 0 #8c8f94,0 8px 0 #8c8f94"></div>
</div>
<div id="editor">
  <div class="a" style="left:0;top:227.5px;width:1010px;height:15.5px;background:#222525"></div>
  <div class="a" style="left:53px;top:0;width:1px;height:650px;background:#2f2f2f"></div>
  <div class="a" style="left:74px;top:34px;width:1px;height:616px;background:#2f2f2f"></div>
  <div class="a" style="left:714.5px;top:34px;width:1px;height:616px;background:#2e2e2f"></div>
  <div class="a" style="left:76.5px;top:162.5px;width:5.5px;height:15.5px;background:#3b2d3d"></div>
  <div class="a" style="left:76.5px;top:227.5px;width:5.5px;height:15.5px;background:#3b2d3d"></div>
  <div class="a" style="left:74.5px;top:178px;width:1px;height:49px;background:#4a3048"></div>
  <div style="position:absolute;left:0;top:0">
<div class="a" style="left:97px;top:359.50px;width:1px;height:16.25px;background:#2f2f2f"></div>
<div class="a" style="left:97px;top:489.50px;width:1px;height:16.25px;background:#2f2f2f"></div>
<div class="a" style="left:97px;top:635.75px;width:1px;height:16.25px;background:#2f2f2f"></div>
<svg class="a" style="left:242px;top:192.5px" width="11" height="3" viewBox="0 0 11 3"><polyline points="0.0,0.5 1.5,2 3.0,0.5 4.5,2 6.0,0.5 7.5,2 9.0,0.5 10.5,2" fill="none" stroke="#6a9a58" stroke-width="0.8"/></svg>
<svg class="a" style="left:181.5px;top:322.5px" width="11" height="3" viewBox="0 0 11 3"><polyline points="0.0,0.5 1.5,2 3.0,0.5 4.5,2 6.0,0.5 7.5,2 9.0,0.5 10.5,2" fill="none" stroke="#6a9a58" stroke-width="0.8"/></svg>
<svg class="a" style="left:176px;top:615px" width="11" height="3" viewBox="0 0 11 3"><polyline points="0.0,0.5 1.5,2 3.0,0.5 4.5,2 6.0,0.5 7.5,2 9.0,0.5 10.5,2" fill="none" stroke="#6a9a58" stroke-width="0.8"/></svg>
<div class="a" style="left:99px;top:63px;width:28px;height:0;border-top:1px dotted #5e8a55"></div>
<div class="ln" style="top:34.50px">479</div>
<div class="ln" style="top:50.75px">480</div>
<div class="cl" style="top:50.75px">        <span style="color:#dcbfee">Color</span> transparentColor = <span style="color:#72bec4">originalColor</span>;</div>
<div class="ln" style="top:67.00px">481</div>
<div class="cl" style="top:67.00px">        transparentColor.<span style="color:#72bec4">a</span> = <span style="color:#72bec4">placementTransparency</span>;</div>
<div class="ln" style="top:83.25px">482</div>
<div class="cl" style="top:83.25px">        <span style="color:#72bec4">currentSpriteRenderer</span>.<span style="color:#72bec4">color</span> = transparentColor;</div>
<div class="ln" style="top:99.50px">483</div>
<div class="cl" style="top:99.50px">    }</div>
<div class="ln" style="top:115.75px">484</div>
<div class="hint" style="top:132.00px;left:78px"><svg class="hic" width="5" height="7" viewBox="0 0 5 7"><path d="M2.5 0.3Q3 2 4.3 3.3Q5 5 4 6.2Q3 7 2.5 7Q1 7 0.5 5.8Q0 4.5 1 3.2Q1.5 4 2 4Q1.5 2 2.5 0.3Z" fill="#5f6166"/></svg>Frequently called<span class="sp"></span><svg class="hic" width="6" height="6" viewBox="0 0 6 6"><rect x="0.5" y="0.5" width="5" height="5" rx="0.8" fill="none" stroke="#5f6166"/><path d="M1.8 4.2L4 2M2.5 2H4V3.5" fill="none" stroke="#5f6166" stroke-width="0.8"/></svg>1 usage<span class="sp"></span><svg class="hic" width="6" height="6" viewBox="0 0 6 6"><circle cx="3" cy="1.8" r="1.5" fill="#5f6166"/><path d="M0.3 6Q0.3 3.5 3 3.5Q5.7 3.5 5.7 6Z" fill="#5f6166"/></svg>EfendiKilic</div>
<div class="ln" style="top:148.25px">485</div>
<div class="cl" style="top:148.25px">    <span style="color:#7196e6">private</span> <span style="color:#7196e6">void</span> <span style="color:#45c69c">RestoreOriginalVisuals</span>()</div>
<div class="ln" style="top:164.50px">486</div>
<div class="cl" style="top:164.50px">    {</div>
<div class="ln" style="top:180.75px">487</div>
<div class="cl" style="top:180.75px">        <span style="color:#7196e6">if</span> (<span style="color:#72bec4">currentSpriteRenderer</span> == <span style="color:#7196e6">null</span>) <span style="color:#7196e6">return</span>;</div>
<div class="ln" style="top:197.00px">488</div>
<div class="ln" style="top:213.25px">489</div>
<div class="cl" style="top:213.25px">        <span style="color:#72bec4">currentSpriteRenderer</span>.<span style="color:#72bec4">color</span> = <span style="color:#72bec4">originalColor</span>;</div>
<div class="ln" style="top:229.50px">490</div>
<div class="cl" style="top:229.50px">    }</div>
<div class="ln" style="top:245.75px">491</div>
<div class="hint" style="top:262.00px;left:78px"><svg class="hic" width="5" height="7" viewBox="0 0 5 7"><path d="M2.5 0.3Q3 2 4.3 3.3Q5 5 4 6.2Q3 7 2.5 7Q1 7 0.5 5.8Q0 4.5 1 3.2Q1.5 4 2 4Q1.5 2 2.5 0.3Z" fill="#5f6166"/></svg>Frequently called<span class="sp"></span><svg class="hic" width="6" height="6" viewBox="0 0 6 6"><rect x="0.5" y="0.5" width="5" height="5" rx="0.8" fill="none" stroke="#5f6166"/><path d="M1.8 4.2L4 2M2.5 2H4V3.5" fill="none" stroke="#5f6166" stroke-width="0.8"/></svg>3 usages<span class="sp"></span><svg class="hic" width="6" height="6" viewBox="0 0 6 6"><circle cx="3" cy="1.8" r="1.5" fill="#5f6166"/><path d="M0.3 6Q0.3 3.5 3 3.5Q5.7 3.5 5.7 6Z" fill="#5f6166"/></svg>EfendiKilic</div>
<div class="ln" style="top:278.25px">492</div>
<div class="cl" style="top:278.25px">    <span style="color:#7196e6">public</span> <span style="color:#7196e6">void</span> <span style="color:#45c69c">RegisterDecoration</span>(<span style="color:#c095f5">DecorationObject</span> decoration)</div>
<div class="ln" style="top:294.50px">493</div>
<div class="cl" style="top:294.50px">    {</div>
<div class="ln" style="top:310.75px">494</div>
<div class="cl" style="top:310.75px">        <span style="color:#7196e6">if</span> (decoration != <span style="color:#7196e6">null</span> &amp;&amp; !<span style="color:#72bec4">activeDecorations</span>.<span style="color:#45c69c">Contains</span>(decoration))</div>
<div class="ln" style="top:327.00px">495</div>
<div class="cl" style="top:327.00px">        {</div>
<div class="ln" style="top:343.25px">496</div>
<div class="cl" style="top:343.25px">            <span style="color:#72bec4">activeDecorations</span>.<span style="color:#45c69c">Add</span>(decoration);</div>
<div class="ln" style="top:359.50px">497</div>
<div class="cl" style="top:359.50px">        }</div>
<div class="ln" style="top:375.75px">498</div>
<div class="cl" style="top:375.75px">    }</div>
<div class="ln" style="top:392.00px">499</div>
<div class="hint" style="top:408.25px;left:78px"><svg class="hic" width="5" height="7" viewBox="0 0 5 7"><path d="M2.5 0.3Q3 2 4.3 3.3Q5 5 4 6.2Q3 7 2.5 7Q1 7 0.5 5.8Q0 4.5 1 3.2Q1.5 4 2 4Q1.5 2 2.5 0.3Z" fill="#5f6166"/></svg>Frequently called<span class="sp"></span><svg class="hic" width="6" height="6" viewBox="0 0 6 6"><rect x="0.5" y="0.5" width="5" height="5" rx="0.8" fill="none" stroke="#5f6166"/><path d="M1.8 4.2L4 2M2.5 2H4V3.5" fill="none" stroke="#5f6166" stroke-width="0.8"/></svg>2 usages<span class="sp"></span><svg class="hic" width="6" height="6" viewBox="0 0 6 6"><circle cx="3" cy="1.8" r="1.5" fill="#5f6166"/><path d="M0.3 6Q0.3 3.5 3 3.5Q5.7 3.5 5.7 6Z" fill="#5f6166"/></svg>EfendiKilic</div>
<div class="ln" style="top:424.50px">500</div>
<div class="cl" style="top:424.50px">    <span style="color:#7196e6">public</span> <span style="color:#7196e6">void</span> <span style="color:#45c69c">UnregisterDecoration</span>(<span style="color:#c095f5">DecorationObject</span> decoration)</div>
<div class="ln" style="top:440.75px">501</div>
<div class="cl" style="top:440.75px">    {</div>
<div class="ln" style="top:457.00px">502</div>
<div class="cl" style="top:457.00px">        <span style="color:#7196e6">if</span> (<span style="color:#72bec4">activeDecorations</span>.<span style="color:#45c69c">Contains</span>(decoration))</div>
<div class="ln" style="top:473.25px">503</div>
<div class="cl" style="top:473.25px">        {</div>
<div class="ln" style="top:489.50px">504</div>
<div class="cl" style="top:489.50px">            <span style="color:#72bec4">activeDecorations</span>.<span style="color:#45c69c">Remove</span>(decoration);</div>
<div class="ln" style="top:505.75px">505</div>
<div class="cl" style="top:505.75px">        }</div>
<div class="ln" style="top:522.00px">506</div>
<div class="cl" style="top:522.00px">    }</div>
<div class="ln" style="top:538.25px">507</div>
<div class="hint" style="top:554.50px;left:77px"><svg class="hic" width="6" height="6" viewBox="0 0 6 6"><rect x="0.5" y="0.5" width="5" height="5" rx="0.8" fill="none" stroke="#5f6166"/><path d="M1.8 4.2L4 2M2.5 2H4V3.5" fill="none" stroke="#5f6166" stroke-width="0.8"/></svg>1 usage<span class="sp"></span><svg class="hic" width="6" height="6" viewBox="0 0 6 6"><circle cx="3" cy="1.8" r="1.5" fill="#5f6166"/><path d="M0.3 6Q0.3 3.5 3 3.5Q5.7 3.5 5.7 6Z" fill="#5f6166"/></svg>EfendiKilic</div>
<div class="ln" style="top:570.75px">508</div>
<div class="cl" style="top:570.75px">    <span style="color:#7196e6">public</span> <span style="color:#7196e6">void</span> <span style="color:#45c69c">PlayMoveSound</span>(<span style="color:#c095f5">AudioClip</span> moveSound)</div>
<div class="ln" style="top:587.00px">509</div>
<div class="cl" style="top:587.00px">    {</div>
<div class="ln" style="top:603.25px">510</div>
<div class="cl" style="top:603.25px">        <span style="color:#7196e6">if</span> (moveSound != <span style="color:#7196e6">null</span>)</div>
<div class="ln" style="top:619.50px">511</div>
<div class="cl" style="top:619.50px">        {</div>
<div class="ln" style="top:635.75px">512</div>
<div class="cl" style="top:635.75px">            <span style="color:#45c69c">PlaySFX</span>(moveSound);</div>
  </div>
  <div class="a" style="left:0;top:0;width:1004px;height:34px;background:#262626;border-bottom:1px solid #3a3a3a">
    <div class="ln" style="top:3.1px">5</div>
    <div class="cl" style="top:3.1px"><span style="color:#7196e6">public class</span> <span style="color:#d0d0d0">DecorationSystem</span> : <span style="color:#c095f5">MonoBehaviour</span></div>
    <div class="ln" style="top:19.3px">476</div>
    <div class="cl" style="top:19.3px">    <span style="color:#7196e6">private void</span> <span style="color:#45c69c">SetPlacementVisuals</span>()</div>
    <div class="ui" style="left:862px;top:2.5px;color:#9da0a8;font-size:8.65px">Assembly-CSharp</div>
    <div class="a" style="left:938px;top:5px;width:1px;height:11px;background:#3a3a3a"></div>
    <svg class="a" style="left:944px;top:5px" width="9" height="8" viewBox="0 0 9 8"><path d="M4.5 0.3L8.8 7.7H0.2Z" fill="#e8b93a"/><path d="M4.5 2.8V5M4.5 6V6.8" stroke="#262626" stroke-width="1"/></svg>
    <div class="ui" style="left:954px;top:2.5px;color:#9da0a8">36</div>
    <svg class="a" style="left:970px;top:6px" width="8" height="7" viewBox="0 0 8 7"><path d="M0.5 3.5L3 6L7.5 0.8" fill="none" stroke="#5fb865" stroke-width="1.1"/></svg>
    <div class="ui" style="left:979px;top:2.5px;color:#9da0a8">46</div>
    <svg class="a" style="left:996px;top:7px" width="6" height="4" viewBox="0 0 6 4"><path d="M0.5 3.5L3 1L5.5 3.5" fill="none" stroke="#9da0a8" stroke-width="1"/></svg>
  </div>
  <svg class="a" style="left:1009px;top:8px" width="6" height="4" viewBox="0 0 6 4"><path d="M0.5 0.5L3 3L5.5 0.5" fill="none" stroke="#9da0a8" stroke-width="1"/></svg>
  <!-- error stripe -->
  <div class="a" style="left:1010px;top:25.0px;width:9px;height:2px;background:#d6b33a"></div>
  <div class="a" style="left:1010px;top:29.6px;width:9px;height:2px;background:#7fa95a"></div>
  <div class="a" style="left:1010px;top:33.4px;width:9px;height:2px;background:#7fa95a"></div>
  <div class="a" style="left:1010px;top:68.0px;width:9px;height:17px;background:#d6b33a"></div>
  <div class="a" style="left:1010px;top:86.0px;width:9px;height:2px;background:#d6b33a"></div>
  <div class="a" style="left:1010px;top:89.0px;width:9px;height:2px;background:#d6b33a"></div>
  <div class="a" style="left:1010px;top:92.0px;width:9px;height:2px;background:#d6b33a"></div>
  <div class="a" style="left:1010px;top:97.2px;width:9px;height:2px;background:#7fa95a"></div>
  <div class="a" style="left:1010px;top:129.2px;width:9px;height:2px;background:#7fa95a"></div>
  <div class="a" style="left:1010px;top:132.9px;width:9px;height:2px;background:#7fa95a"></div>
  <div class="a" style="left:1010px;top:156.7px;width:9px;height:2px;background:#7fa95a"></div>
  <div class="a" style="left:1010px;top:162.9px;width:9px;height:2px;background:#7fa95a"></div>
  <div class="a" style="left:1010px;top:174.2px;width:9px;height:2px;background:#d6b33a"></div>
  <div class="a" style="left:1010px;top:177.9px;width:9px;height:2px;background:#d6b33a"></div>
  <div class="a" style="left:1010px;top:181.8px;width:9px;height:2px;background:#d6b33a"></div>
  <div class="a" style="left:1010px;top:189.2px;width:9px;height:2px;background:#7fa95a"></div>
  <div class="a" style="left:1010px;top:196.8px;width:9px;height:2px;background:#7fa95a"></div>
  <div class="a" style="left:1010px;top:213.6px;width:9px;height:2px;background:#d6b33a"></div>
  <div class="a" style="left:1010px;top:216.2px;width:9px;height:2px;background:#d6b33a"></div>
  <div class="a" style="left:1010px;top:219.2px;width:9px;height:2px;background:#d6b33a"></div>
  <div class="a" style="left:1010px;top:233.2px;width:9px;height:2px;background:#7fa95a"></div>
  <div class="a" style="left:1010px;top:237.9px;width:9px;height:2px;background:#7fa95a"></div>
  <div class="a" style="left:1010px;top:244.8px;width:9px;height:2px;background:#7fa95a"></div>

</div>
<div id="rstrip">
  <svg class="a" style="left:6px;top:7px" width="13" height="13" viewBox="0 0 13 13"><path d="M2 9.5V6Q2 2 6 2Q10 2 10 6V9.5L11 10.5H1Z" fill="none" stroke="#c9ccd1" stroke-width="1"/><path d="M5 12H7" stroke="#c9ccd1"/><circle cx="10.5" cy="2.5" r="2" fill="#e55765"/></svg>
  <svg class="a" style="left:7px;top:33px" width="12" height="12" viewBox="0 0 12 12"><path d="M2 4.5Q4 1 8 2Q11 3 10 6Q9 8.5 6 8Q3.8 7.5 4.5 5.5Q5.3 4 7 4.8M1.5 7.5Q3 11 7 10.5Q9.5 10 10.5 8.5" fill="none" stroke="#c9ccd1" stroke-width="1.1"/></svg>
  <svg class="a" style="left:7px;top:57px" width="11" height="13" viewBox="0 0 11 13"><ellipse cx="5.5" cy="2.5" rx="4.8" ry="1.8" fill="none" stroke="#c9ccd1"/><path d="M0.7 2.5V10.5Q0.7 12.3 5.5 12.3Q10.3 12.3 10.3 10.5V2.5M0.7 5.2Q0.7 7 5.5 7Q10.3 7 10.3 5.2M0.7 7.9Q0.7 9.7 5.5 9.7Q10.3 9.7 10.3 7.9" fill="none" stroke="#c9ccd1"/></svg>
  <svg class="a" style="left:6px;top:83px" width="13" height="11" viewBox="0 0 13 11"><path d="M0.5 6.5H3L5 1L8 10L10 5.5H12.5" fill="none" stroke="#c9ccd1" stroke-width="1.1"/></svg>
</div>
<div id="status">
  <div class="ui" style="left:9px;top:1.3px;color:#9da0a8">ProjectAqua</div>
  <svg class="a" style="left:62px;top:6px" width="4" height="6" viewBox="0 0 4 6"><path d="M0.5 0.5L3 3L0.5 5.5" fill="none" stroke="#8c8f94" stroke-width="0.9"/></svg>
  <div class="ui" style="left:71px;top:1.3px;color:#9da0a8">Assembly-CSharp</div>
  <svg class="a" style="left:147px;top:6px" width="4" height="6" viewBox="0 0 4 6"><path d="M0.5 0.5L3 3L0.5 5.5" fill="none" stroke="#8c8f94" stroke-width="0.9"/></svg>
  <div class="ui" style="left:156px;top:1.3px;color:#9da0a8">Assets</div>
  <svg class="a" style="left:189px;top:6px" width="4" height="6" viewBox="0 0 4 6"><path d="M0.5 0.5L3 3L0.5 5.5" fill="none" stroke="#8c8f94" stroke-width="0.9"/></svg>
  <div class="ui" style="left:197px;top:1.3px;color:#9da0a8">Scripts</div>
  <svg class="a" style="left:231px;top:6px" width="4" height="6" viewBox="0 0 4 6"><path d="M0.5 0.5L3 3L0.5 5.5" fill="none" stroke="#8c8f94" stroke-width="0.9"/></svg>
  <div class="ui" style="left:240px;top:1.3px;color:#9da0a8">Decor</div>
  <svg class="a" style="left:269px;top:6px" width="4" height="6" viewBox="0 0 4 6"><path d="M0.5 0.5L3 3L0.5 5.5" fill="none" stroke="#8c8f94" stroke-width="0.9"/></svg>
  <div class="ui" style="left:278px;top:1.3px;color:#9da0a8">DecorationSystem.cs</div>
  <svg class="a" style="left:367px;top:6px" width="4" height="6" viewBox="0 0 4 6"><path d="M0.5 0.5L3 3L0.5 5.5" fill="none" stroke="#8c8f94" stroke-width="0.9"/></svg>
  <svg class="a" style="left:376px;top:4px" width="10" height="10" viewBox="0 0 10 10"><circle cx="3" cy="3" r="2" fill="none" stroke="#d9a343"/><path d="M4.5 4.5L9 9M6 9L9 6" stroke="#d9a343"/></svg>
  <div class="ui" style="left:389px;top:1.3px;color:#9da0a8">DecorationSystem</div>
</div>
<div id="game" style="position:absolute;left:491px;top:320px;width:789px;height:400px;overflow:hidden">
<svg width="789" height="400" viewBox="491 320 789 400" style="position:absolute;left:0;top:0">
  <defs>
    <filter id="blur" x="-50%" y="-10%" width="200%" height="120%"><feGaussianBlur stdDeviation="10"/></filter>
    <linearGradient id="water" x1="0" y1="337" x2="0" y2="705" gradientUnits="userSpaceOnUse">
      <stop offset="0" stop-color="#44aad1"/>
      <stop offset="0.068" stop-color="#3796c4"/>
      <stop offset="0.17" stop-color="#2a7db3"/>
      <stop offset="0.28" stop-color="#2167a0"/>
      <stop offset="0.33" stop-color="#1e5e96"/>
      <stop offset="0.44" stop-color="#1c5591"/>
      <stop offset="0.6" stop-color="#1b4e8d"/>
      <stop offset="0.8" stop-color="#1c4c90"/>
      <stop offset="1" stop-color="#1c4b90"/>
    </linearGradient>
    <linearGradient id="ray" x1="0" y1="337" x2="0" y2="560" gradientUnits="userSpaceOnUse">
      <stop offset="0" stop-color="#9fe0ff" stop-opacity="0.09"/>
      <stop offset="1" stop-color="#9fe0ff" stop-opacity="0"/>
    </linearGradient>
    <radialGradient id="rays" cx="830" cy="300" r="330" gradientUnits="userSpaceOnUse">
      <stop offset="0" stop-color="#7fd0ee" stop-opacity="0.18"/>
      <stop offset="1" stop-color="#7fd0ee" stop-opacity="0"/>
    </radialGradient>
    <linearGradient id="backdune" x1="0" y1="630" x2="0" y2="690" gradientUnits="userSpaceOnUse">
      <stop offset="0" stop-color="#b0a9c0"/>
      <stop offset="1" stop-color="#958ea9"/>
    </linearGradient>
    <linearGradient id="frontdune" x1="0" y1="630" x2="0" y2="705" gradientUnits="userSpaceOnUse">
      <stop offset="0" stop-color="#bab2bb"/>
      <stop offset="0.45" stop-color="#aea5b0"/>
      <stop offset="1" stop-color="#a096a6"/>
    </linearGradient>
    <linearGradient id="pill" x1="1242" y1="0" x2="1275" y2="0" gradientUnits="userSpaceOnUse">
      <stop offset="0" stop-color="#1a981a"/>
      <stop offset="0.5" stop-color="#22a222"/>
      <stop offset="0.8" stop-color="#68bd68"/>
      <stop offset="0.93" stop-color="#5db45d"/>
      <stop offset="1" stop-color="#2e9a2e"/>
    </linearGradient>
    <linearGradient id="dome" x1="0" y1="327" x2="0" y2="351" gradientUnits="userSpaceOnUse">
      <stop offset="0" stop-color="#505058"/>
      <stop offset="1" stop-color="#1e1e24"/>
    </linearGradient>
  </defs>
  <!-- frame outer -->
  <rect x="491" y="322" width="789" height="398" fill="#1b1a24"/>
  <!-- water -->
  <rect x="497" y="337" width="735" height="368" fill="url(#water)"/>
  <g fill="url(#ray)" filter="url(#blur)">
    <path d="M560 337 L600 337 L630 560 L585 560 Z"/>
    <path d="M660 337 L690 337 L740 560 L700 560 Z"/>
    <path d="M780 337 L830 337 L860 560 L805 560 Z"/>
    <path d="M930 337 L960 337 L975 560 L940 560 Z"/>
    <path d="M1040 337 L1090 337 L1080 560 L1030 560 Z"/>
    <path d="M1150 337 L1180 337 L1160 560 L1130 560 Z"/>
  </g>
  <!-- bubbles -->
  <g fill="none" stroke="#6fb6dc" stroke-opacity="0.22" stroke-width="1.2">
    <circle cx="604" cy="346" r="5"/>
    <circle cx="1082" cy="449" r="6"/>
    <circle cx="899" cy="418" r="4"/>
    <circle cx="510" cy="601" r="6"/>
    <circle cx="755" cy="595" r="4"/>
    <circle cx="770" cy="605" r="4"/>
    <circle cx="1089" cy="537" r="4"/>
    <circle cx="1007" cy="613" r="3"/>
    <circle cx="510" cy="525" r="3"/>
  </g>
  <!-- back dune -->
  <path d="M590 636 C620 633 660 632 700 640 C735 647 770 656 819 659 C850 661 880 660 949 649 C985 643 1020 638 1053 638.7 C1100 639 1140 643 1232 655.6 L1232 705 L590 705 Z" fill="url(#backdune)" stroke="#1a2036" stroke-width="1.5"/>
  <!-- ship (faded) -->
  <g opacity="0.75">
    <path d="M1091 598 Q1094 580 1098 574 L1100 590 Q1120 596 1130 603 L1150 615 Q1165 620 1172 628 L1170 646 Q1140 646 1110 640 Q1096 636 1093 620 Z" fill="#56506e" stroke="#2c2846" stroke-width="1.8"/>
    <path d="M1098 574 L1101 640" stroke="#2c2846" stroke-width="1.5"/>
    <path d="M1100 592 Q1115 598 1128 604" stroke="#3a3656" stroke-width="1.2" fill="none"/>
    <ellipse cx="1119" cy="617" rx="4.5" ry="7" fill="#3a3656" stroke="#2c2846" stroke-width="1.2"/>
    <ellipse cx="1138" cy="630" rx="3.8" ry="5.5" fill="#3a3656" stroke="#2c2846" stroke-width="1.2"/>
    <ellipse cx="1154" cy="637" rx="3.4" ry="5" fill="#3a3656" stroke="#2c2846" stroke-width="1.2"/>
    <path d="M1113 598 L1122 594 L1126 600 Z" fill="#2a2a40"/>
    <path d="M1138 563 V620 M1149 576 V625 M1156 565 L1160 626" stroke="#2c2846" stroke-width="1.4"/>
    <path d="M1122 561 Q1135 556 1150 560 L1152 580 Q1136 576 1122 578 Z" fill="#2a2a44"/>
    <circle cx="1137" cy="567" r="2.6" fill="#c9c6d6"/>
    <path d="M1130 586 Q1142 583 1152 586 L1151 598 Q1140 595 1130 598 Z M1148 590 Q1156 588 1163 591 L1162 600 Q1154 598 1148 600 Z" fill="#3c3a5a"/>
    <path d="M1159 563 L1166 568 L1160 574 Z" fill="#7a4a6a"/>
    <path d="M1138 553 V563" stroke="#2c2846" stroke-width="1"/>
  </g>
<!-- front dune -->
  <path d="M497 629.7 C530 632 560 634 575 637 C590 640 600 641 605 643 C630 650 650 654 670 658 C700 665 730 672 774 677 C790 678 805 677 819 676 C845 673 880 670 919 670.5 C945 672 960 674 979 677 C1000 680 1020 685 1038 684.7 C1060 684 1080 683 1097 681.7 C1120 680 1140 674 1157 670 C1180 664 1205 659 1232 655.6 L1232 705 L497 705 Z" fill="url(#frontdune)"/>
  <path d="M590 640 C600 641 602 642 605 643 C630 650 650 654 670 658 C700 665 730 672 774 677 C790 678 805 677 819 676 C845 673 880 670 919 670.5 C945 672 960 674 979 677 C1000 680 1020 685 1038 684.7 C1060 684 1080 683 1097 681.7 C1120 680 1140 674 1157 670 C1180 664 1205 659 1232 655.6" fill="none" stroke="#1a2036" stroke-width="1.7"/>
  <path d="M497 629.7 C530 632 560 634 575 637" fill="none" stroke="#24304c" stroke-width="0.8" stroke-opacity="0.6"/>
  <path d="M610 646 C630 652 650 656 670 660 C700 667 730 674 774 679 C790 680 805 679 819 678 C845 675 880 672 919 672.5 C945 674 960 676 979 679" fill="none" stroke="#d8d2dc" stroke-width="1.5" stroke-opacity="0.35"/>
  <!-- sand texture darker bottom -->
  <!-- rock -->
  <g stroke="#1e2438" stroke-width="1.1" stroke-linejoin="round">
    <path d="M762 669 Q766 662 772 657 Q776 654 785 654 L787 662 Q783 670 777 673 Q768 673 762 669 Z" fill="#a3a5ac"/>
    <path d="M771 673 Q773 667 781 666 L808 665 Q816 666 818 672 L819 677 Q800 678 772 677 Z" fill="#5e6272"/>
    <path d="M777 662 Q779 653 795 652.5 Q808 652 811 658 Q813 665 806 667 Q792 669 782 667 Q777 666 777 662 Z" fill="#9ca0a8"/>
  </g>
  <path d="M783 659 Q795 655 806 656" fill="none" stroke="#c8cad0" stroke-width="1" stroke-opacity="0.5"/>
  <path d="M792 676 Q797 673 802 676 M808 676 Q812 673 815 676" fill="none" stroke="#b0b3bb" stroke-width="1.2" stroke-opacity="0.6"/>
  <!-- coral -->
  <g fill="none" stroke="#9776c6" stroke-width="3" stroke-linecap="round" stroke-linejoin="round">
    <path d="M704 637 Q705 628 708 622 Q702 616 697 608 Q693 601 693.5 600"/>
    <path d="M708 622 Q704 610 703 600 Q702 594 702.5 591"/>
    <path d="M708 622 Q711 612 711 601"/>
    <path d="M706 634 Q716 630 721 620 Q724 612 725 606 Q726 596 726 586 Q726 582 724 578"/>
    <path d="M726 586 Q730 583 732 580"/>
    <path d="M725 606 Q719 600 717 594"/>
    <path d="M726 596 Q732 594 734 590"/>
    <path d="M724 612 Q731 610 737 607"/>
    <path d="M702 632 Q697 630 693 629"/>
    <path d="M710 633 Q722 632 731 627"/>
  </g>
  <!-- anemone 1 -->
  <g>
    <path d="M584 632 Q584 643 591.0 643 Q598 643 598 632 Z" fill="#8a4a7a" stroke="#2a1a2e" stroke-width="0.8"/>
    <circle cx="589" cy="625" r="12.2" fill="#8e5a82"/>
    <path d="M592.4 624.8 Q597.4 627.6 604.9 624.2 M592.0 626.7 Q594.0 630.8 601.1 631.4 M591.1 627.7 Q591.4 632.7 597.9 636.0 M589.2 628.4 Q586.5 633.2 589.8 639.8 M587.7 628.1 Q582.6 632.0 582.4 640.2 M586.4 627.2 Q581.8 627.5 578.3 633.4 M585.7 625.9 Q581.5 624.5 575.8 628.6 M585.7 624.0 Q581.3 619.3 572.4 620.4 M586.4 622.8 Q584.4 616.9 576.0 614.5 M588.0 621.7 Q589.5 617.3 585.0 612.2 M589.7 621.7 Q593.5 617.8 592.3 610.7 M590.9 622.2 Q595.8 620.2 597.7 613.1 M592.0 623.5 Q598.5 623.9 604.6 617.5" fill="none" stroke="#c896bc" stroke-width="2" stroke-linecap="round"/>
    <path d="M592.3 625.7 Q596.5 629.8 604.8 628.3 M591.8 627.0 Q594.3 632.8 602.9 634.6 M589.9 628.3 Q588.3 633.5 593.1 639.3 M588.5 628.4 Q585.3 631.9 586.9 638.4 M587.1 627.8 Q581.5 630.3 579.4 638.1 M585.9 626.4 Q580.2 625.7 574.4 631.4 M585.6 624.8 Q581.2 621.5 573.4 623.9 M586.1 623.3 Q582.8 617.6 573.9 616.6 M587.0 622.2 Q586.5 615.7 578.9 611.4 M588.3 621.7 Q590.2 617.1 586.2 611.5 M590.3 621.9 Q594.5 618.9 594.6 611.9 M591.5 622.7 Q597.1 621.5 600.7 614.5 M592.3 624.3 Q598.6 626.4 606.2 621.6" fill="none" stroke="#a87098" stroke-width="1.6" stroke-linecap="round"/>
    <ellipse cx="589" cy="625" rx="4.2" ry="2.0" fill="#e2b03a"/>
  </g>
  <!-- anemone 2 -->
  <g>
    <path d="M1172 650 Q1172 661 1180.0 661 Q1188 661 1188 650 Z" fill="#8a4a7a" stroke="#2a1a2e" stroke-width="0.8"/>
    <circle cx="1179" cy="641" r="13.3" fill="#8e5a82"/>
    <path d="M1182.7 641.3 Q1188.7 645.4 1198.3 642.3 M1182.1 643.0 Q1185.5 649.3 1195.4 650.6 M1181.0 644.1 Q1180.8 649.5 1187.4 653.7 M1179.6 644.7 Q1177.5 649.2 1181.5 655.1 M1178.0 644.6 Q1173.0 649.2 1173.9 657.9 M1176.3 643.6 Q1169.8 645.1 1165.8 653.1 M1175.4 641.8 Q1170.8 639.9 1164.3 644.1 M1175.5 639.8 Q1170.7 634.4 1160.6 635.3 M1176.1 638.7 Q1174.8 633.8 1167.3 631.9 M1177.5 637.6 Q1178.3 631.8 1172.1 626.5 M1179.1 637.3 Q1182.8 631.4 1179.6 623.1 M1181.3 638.1 Q1186.8 636.3 1189.4 628.8 M1182.3 639.4 Q1188.6 640.0 1194.8 633.7" fill="none" stroke="#c896bc" stroke-width="2" stroke-linecap="round"/>
    <path d="M1182.6 642.0 Q1185.9 646.0 1194.0 645.0 M1181.6 643.7 Q1182.9 649.8 1191.1 652.9 M1180.1 644.5 Q1178.5 650.6 1184.1 656.9 M1178.3 644.6 Q1173.5 650.1 1175.3 659.1 M1177.0 644.1 Q1172.1 646.1 1170.4 653.3 M1175.6 642.5 Q1170.8 641.5 1165.2 646.7 M1175.3 640.8 Q1170.7 637.6 1162.7 640.3 M1175.7 639.3 Q1171.8 633.1 1161.8 632.4 M1177.0 637.9 Q1177.1 633.0 1170.8 629.2 M1178.6 637.3 Q1181.1 632.7 1177.5 626.3 M1180.2 637.5 Q1185.6 632.7 1185.1 623.7 M1181.7 638.5 Q1187.8 637.5 1191.8 630.1 M1182.6 640.2 Q1188.6 642.2 1196.2 637.2" fill="none" stroke="#a87098" stroke-width="1.6" stroke-linecap="round"/>
    <ellipse cx="1179" cy="641" rx="4.6" ry="2.2" fill="#e2b03a"/>
  </g>
  <!-- castle -->
  <g stroke="#3a3848" stroke-width="0.9" stroke-linejoin="round">
    <rect x="1022" y="625" width="15" height="20" fill="#bdb7b8"/>
    <rect x="1031" y="611" width="12" height="16" fill="#c9c3c2"/>
    <path d="M1030 607 H1044 V618 H1030 Z" fill="#dcd6d2"/>
    <path d="M1031 607 L1037 597 L1043 607 Z" fill="#dcd6d2"/>
    <rect x="1008" y="623" width="14" height="22" fill="#c9c3c2"/>
    <rect x="1037" y="624" width="14" height="21" fill="#c9c3c2"/>
    <path d="M1007 617 H1024 V626 H1007 Z" fill="#e0dad5"/>
    <path d="M1036 618 H1052 V627 H1036 Z" fill="#e0dad5"/>
  </g>
  <path d="M1037 597 V589" stroke="#444" stroke-width="0.8"/>
  <path d="M1037 589 L1043 591.5 L1037 594 Z" fill="#b84848"/>
  <g fill="#2e2c3c">
    <path d="M1012 640 Q1015 630 1018 640 Z"/>
    <path d="M1041 640 Q1044 630 1047 640 Z"/>
    <path d="M1026 645 Q1030 633 1034 645 Z"/>
    <path d="M1034 615 Q1037 609 1040 615 Z"/>
  </g>
  <path d="M1003 645 Q1008 640 1014 644" stroke="#d8d2cc" stroke-width="1.2" fill="none"/>
<!-- yellow fish -->
  <g>
    <path d="M925 676 L931 679 L926 685 Z" fill="#c8a83a" stroke="#3a3020" stroke-width="0.8"/>
    <path d="M929 680 Q931 672 940 672 Q949 672 952 679 Q950 687 940 688 Q931 687 929 680 Z" fill="#e4d850" stroke="#3a3020" stroke-width="0.9"/>
    <circle cx="946" cy="677" r="1.6" fill="#2a88c8"/>
    <path d="M950 675 L954 672" stroke="#3a3020" stroke-width="0.8"/>
    <circle cx="937" cy="681" r="1" fill="#a89a30"/>
  </g>
<!-- pumpkin -->
  <g stroke="#4e2a44" stroke-width="1.1">
    <ellipse cx="553" cy="383" rx="10.5" ry="13.5" fill="#b26a5c"/>
    <ellipse cx="571" cy="384" rx="10.5" ry="13.5" fill="#ad6458"/>
    <ellipse cx="562" cy="382" rx="9" ry="14.5" fill="#b8705e"/>
  </g>
  <path d="M562 369 Q562 362 567 361 Q571 361 572 365" fill="none" stroke="#2a3a50" stroke-width="2"/>
  <path d="M551 375 L558 380 L553 382 Z M574 378 L566 381 L571 384 Z" fill="#e6e08e" stroke="#4e2a44" stroke-width="0.6"/>
  <path d="M552 385 L555 389 L559 387 L562 391 L567 388 L572 386 Q568 393 561 394 Q555 392 552 385 Z" fill="#e6e08e" stroke="#4e2a44" stroke-width="0.6"/>
  <!-- small orange fish left -->
  <g stroke-linejoin="round">
    <path d="M587 427 L590 421 L593 425 L596 419 L599 424 L603 420 L604 425 L608 424 L602 430 Z" fill="#2e2a56"/>
    <path d="M586 438 L589 444 L593 440 L596 445 L599 439 L603 441 L600 434 Z" fill="#2e2a56"/>
    <path d="M579 433 Q584 426 596 426 Q606 424 613 426 Q610 431 604 434 Q594 442 584 441 Q578 439 579 433 Z" fill="#e2a24e" stroke="#2e2a56" stroke-width="1"/>
    <path d="M590 436 Q597 433 604 429" fill="none" stroke="#2e2a56" stroke-width="1.2"/>
    <circle cx="585" cy="432" r="2" fill="#f2e2a6" stroke="#2e2a56" stroke-width="0.8"/>
  </g>
  <!-- mid orange fish -->
  <g stroke-linejoin="round">
    <path d="M826 403 L829 397 L833 401 L837 395 L840 400 L845 396 L846 401 L851 399 L850 405 Z" fill="#2e2a56"/>
    <path d="M836 419 L838 426 L843 423 L846 429 L849 424 L854 428 L853 420 Z" fill="#2e2a56"/>
    <path d="M821 405 Q830 401 844 404 Q856 408 862 416 Q862 424 856 427 Q846 425 838 419 Q828 411 821 405 Z" fill="#e2a24e" stroke="#2e2a56" stroke-width="1"/>
    <path d="M830 408 Q842 410 850 420" fill="none" stroke="#2e2a56" stroke-width="1.3"/>
    <ellipse cx="850" cy="414" rx="2" ry="2.6" fill="#f2e2a6" stroke="#2e2a56" stroke-width="0.8"/>
  </g>
  <!-- bunny fish -->
  <g>
    <path d="M887 384 Q886 379 892 380 Q898 377 902 382 Q905 388 902 393 Q897 397 891 395 Q885 392 887 384 Z" fill="#b48ed8"/>
    <path d="M899 385 Q905 377 920 377 Q936 378 941 387 Q939 395 926 398 Q908 399 899 391 Z" fill="#ece3c3" stroke="#3a3650" stroke-width="0.9"/>
    <path d="M927 380 Q926 368 931 364 Q936 365 934 372 Q932 378 931 381 Z" fill="#ece3c3" stroke="#3a3650" stroke-width="0.9"/>
    <path d="M931 381 Q936 372 944 371 Q949 373 945 377 Q940 380 934 383 Z" fill="#ece3c3" stroke="#3a3650" stroke-width="0.9"/>
    <path d="M929 377 Q929 370 931 367 M934 379 Q939 375 943 374" fill="none" stroke="#c4a0d0" stroke-width="1.3"/>
    <circle cx="932" cy="386" r="1.2" fill="#4a4a8a"/>
  </g>
<!-- tuna -->
  <g stroke="#1c1e30" stroke-linejoin="round">
    <path d="M1049 405 L1053 398 L1058 405 L1053 414 Z" fill="#6a6e8a" stroke-width="0.8"/>
    <path d="M1056 405 Q1068 396 1085 398 L1086 414 Q1070 414 1056 405 Z" fill="#484a66" stroke-width="1"/>
    <path d="M1084 398 Q1098 398 1101 404 Q1098 411 1086 414 Z" fill="#b8b8cc" stroke-width="1"/>
    <path d="M1077 397 Q1079 393 1083 393 Q1086 395 1085 398 Z" fill="#b8b8cc" stroke-width="0.8"/>
  </g>
  <path d="M1089 413 L1092 421 L1094 413 Z" fill="#d05060"/>
  <path d="M1066 405 Q1072 405 1076 403" fill="none" stroke="#b8b8cc" stroke-width="1"/>
<!-- frames -->
  <rect x="492" y="324" width="745" height="3.5" fill="#cdc5e8"/>
  <rect x="492" y="327.5" width="745" height="3.5" fill="#7e7791"/>
  <rect x="492" y="331" width="745" height="5.5" fill="#3a3452"/>
  <rect x="492.5" y="336" width="3.5" height="369" fill="#9a7b72"/>
  <rect x="1232.5" y="336" width="3.5" height="369" fill="#8e6f68"/>
  <rect x="492" y="706" width="745" height="4" fill="#cdc5e8"/>
  <rect x="492" y="710" width="745" height="3.5" fill="#7e7791"/>
  <rect x="492" y="713.5" width="745" height="6.5" fill="#3a3452"/>
  <!-- side panel -->
  <rect x="1236" y="320.5" width="44" height="402" fill="#1a1418"/>
  <rect x="1238.5" y="322.5" width="41" height="400" fill="#86665f"/>
  <rect x="1238.5" y="322.5" width="41" height="30" fill="#9a7a72"/>
  <rect x="1276.5" y="322" width="3.5" height="400" fill="#1a1418"/>
  <path d="M1242.5 344 Q1242.5 326.5 1259 326.5 Q1275.5 326.5 1275.5 344 V694 Q1275.5 712 1259 712 Q1242.5 712 1242.5 694 Z" fill="url(#pill)" stroke="#0b0f0b" stroke-width="2"/>
  <path d="M1243.5 344 Q1243.5 327.5 1259 327.5 Q1274.5 327.5 1274.5 344 V350 Q1266 352 1259 349 Q1250 351 1243.5 348 Z" fill="url(#dome)"/>
  <path d="M1248 344 Q1250 336 1260 335" fill="none" stroke="#d8d8dc" stroke-width="2.4" stroke-linecap="round"/>
  <circle cx="1266" cy="337" r="1.6" fill="#c8c8cc"/>
  <g stroke="#0b0f0b" stroke-width="2">
    <path d="M1242.5 387 H1275.5 M1242.5 453.5 H1275.5 M1242.5 520 H1275.5 M1242.5 587 H1275.5 M1242.5 654 H1275.5"/>
  </g>
  <g stroke="#b8e8b8" stroke-opacity="0.0" stroke-width="1.5">
    <path d="M1270 360 V382 M1270 395 V448 M1270 462 V515 M1270 528 V582 M1270 595 V649 M1270 662 V688"/>
  </g>
  <!-- icons -->
  <g fill="#f6f6f4" stroke="#0b0f0b" stroke-width="1.4" stroke-linejoin="round" stroke-linecap="round">
    <!-- cart -->
    <path d="M1244 347 L1249 346 L1251 350 L1271 349 L1266 361 L1254 363 L1255 366 L1270 365.5 L1270 368 L1252 369 L1250 352 Z"/>
    <circle cx="1254" cy="375" r="2.1"/><circle cx="1264" cy="374" r="2.1"/>
    <!-- magnifier -->
    <circle cx="1260" cy="416" r="9.5" fill="none" stroke="#0b0f0b" stroke-width="5.5"/>
    <circle cx="1260" cy="416" r="9.5" fill="none" stroke="#f6f6f4" stroke-width="2.6"/>
    <path d="M1266 424 L1273 435" stroke="#0b0f0b" stroke-width="5.5"/>
    <path d="M1266 424 L1273 435" stroke="#f6f6f4" stroke-width="3"/>
    <path d="M1262 407 L1257 418 L1261 417 L1258 426" fill="none" stroke="#f6f6f4" stroke-width="1"/>
    <!-- fish + wrench -->
    <path d="M1247.5 478 Q1249 473.5 1255 474.5 Q1262 477 1264.5 486 L1265.5 491 Q1262 493.5 1257.5 490.5 Q1249.5 486 1247.5 478 Z"/>
    <path d="M1260.5 492 L1264.5 489 Q1268.5 494 1273.5 495 Q1270.5 498.5 1270.5 503.5 Q1265 500.5 1260.5 498 Z"/>
    <circle cx="1251.5" cy="479" r="0.8" fill="#222" stroke="none"/><circle cx="1254" cy="479.5" r="0.8" fill="#222" stroke="none"/>
    <path d="M1251.5 497 L1267 479" stroke="#0b0f0b" stroke-width="4.6"/>
    <path d="M1251.5 497 L1267 479" stroke="#f6f6f4" stroke-width="2.2"/>
    <circle cx="1249.5" cy="499" r="3.2" fill="none" stroke="#0b0f0b" stroke-width="3.8"/>
    <circle cx="1249.5" cy="499" r="3.2" fill="none" stroke="#f6f6f4" stroke-width="1.8"/>
    <path d="M1263.5 476 Q1265 469 1270.5 469.5 L1268.5 473.5 L1271.5 477 L1275 474.5 Q1275.5 481 1268 481.5 Z"/>
    <!-- book -->
    <path d="M1246 546 Q1252 542 1260 546 Q1267 542 1274 546 V561 Q1267 558 1260 562 Q1252 558 1246 561 Z"/>
    <path d="M1260 546 V562" stroke-width="1"/>
    <!-- bars -->
    <rect x="1248" y="612" width="4" height="10" />
    <rect x="1256.5" y="604.5" width="4" height="17"/>
    <rect x="1264.5" y="608" width="4" height="14"/>
    <rect x="1247" y="626.5" width="24.5" height="5"/>
    <!-- gear -->
    <g transform="translate(1259 683) scale(0.84) translate(-1259.75 -688)">
    <path d="M1257 671 H1262 L1263 675 L1267 677 L1271 674 L1274 678 L1271 681 L1272 685 L1276 686 V690 L1272 691 L1271 695 L1274 698 L1271 702 L1267 699 L1263 701 L1262 705 H1257 L1256 701 L1252 699 L1248 702 L1245 698 L1248 695 L1247 691 L1243.5 690 V686 L1247 685 L1248 681 L1245 678 L1248 674 L1252 677 L1256 675 Z"/>
    <circle cx="1259.5" cy="688" r="3.6" fill="#27a227" stroke-width="1.6"/>
    </g>
  </g>
  <path d="M1249 699 Q1258 707 1269 699" fill="none" stroke="#c8f0c8" stroke-width="1.6" stroke-opacity="0.8"/>
</svg>
</div>


</body></html>
